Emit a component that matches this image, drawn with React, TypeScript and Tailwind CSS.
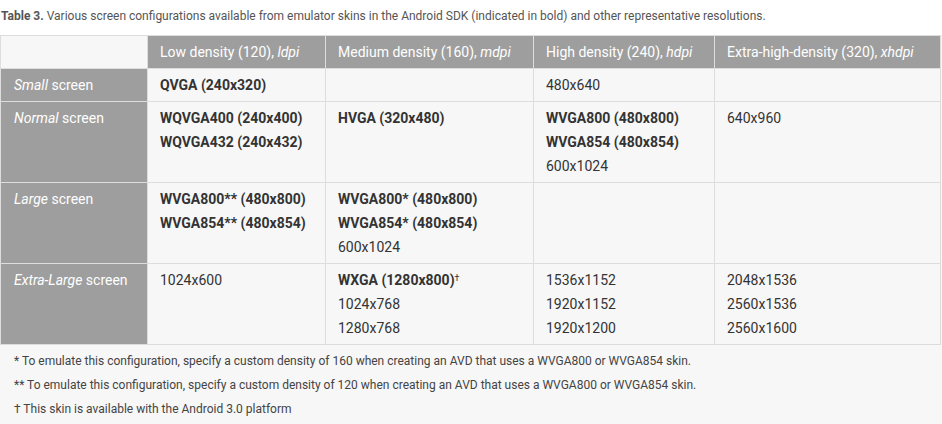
import React from 'react';

type Line = { text: string; bold?: boolean; sup?: string };

const rows: { size: string; cells: Line[][] }[] = [
  {
    size: 'Small',
    cells: [[{ text: 'QVGA (240x320)', bold: true }], [], [{ text: '480x640' }], []],
  },
  {
    size: 'Normal',
    cells: [
      [
        { text: 'WQVGA400 (240x400)', bold: true },
        { text: 'WQVGA432 (240x432)', bold: true },
      ],
      [{ text: 'HVGA (320x480)', bold: true }],
      [
        { text: 'WVGA800 (480x800)', bold: true },
        { text: 'WVGA854 (480x854)', bold: true },
        { text: '600x1024' },
      ],
      [{ text: '640x960' }],
    ],
  },
  {
    size: 'Large',
    cells: [
      [
        { text: 'WVGA800** (480x800)', bold: true },
        { text: 'WVGA854** (480x854)', bold: true },
      ],
      [
        { text: 'WVGA800* (480x800)', bold: true },
        { text: 'WVGA854* (480x854)', bold: true },
        { text: '600x1024' },
      ],
      [],
      [],
    ],
  },
  {
    size: 'Extra-Large',
    cells: [
      [{ text: '1024x600' }],
      [{ text: 'WXGA (1280x800)', bold: true, sup: '†' }, { text: '1024x768' }, { text: '1280x768' }],
      [{ text: '1536x1152' }, { text: '1920x1152' }, { text: '1920x1200' }],
      [{ text: '2048x1536' }, { text: '2560x1536' }, { text: '2560x1600' }],
    ],
  },
];

const headers: [string, string][] = [
  ['Low density (120), ', 'ldpi'],
  ['Medium density (160), ', 'mdpi'],
  ['High density (240), ', 'hdpi'],
  ['Extra-high-density (320), ', 'xhdpi'],
];

const App: React.FC = () => {
  return (
    <div className="w-[942px] h-[424px] bg-white overflow-hidden font-['Roboto',sans-serif] text-[#333]">
      <p className="h-[35px] pt-[8px] pl-[1px] text-[12px] leading-[16px] text-[#555]">
        <b className="font-bold">Table 3.</b> Various screen configurations available from emulator skins in the
        Android SDK (indicated in bold) and other representative resolutions.
      </p>

      <div className="bg-[#f7f7f7]">
        <table className="table-fixed border-collapse w-[940px] text-[14px] leading-6">
          <colgroup>
            <col className="w-[147px]" />
            <col className="w-[178px]" />
            <col className="w-[208px]" />
            <col className="w-[181px]" />
            <col className="w-[226px]" />
          </colgroup>
          <thead>
            <tr>
              <th className="border border-[#dddddd] bg-[#f7f7f7]" />
              {headers.map(([label, dpi]) => (
                <th
                  key={dpi}
                  className="border border-[#dddddd] bg-[#9e9e9e] px-3 py-1 text-left font-normal text-white"
                >
                  {label}
                  <i>{dpi}</i>
                </th>
              ))}
            </tr>
          </thead>
          <tbody>
            {rows.map((row) => (
              <tr key={row.size}>
                <td className="border border-[#dddddd] bg-[#9e9e9e] pl-[13px] pr-3 py-1 align-top text-white">
                  <i>{row.size}</i> screen
                </td>
                {row.cells.map((lines, i) => (
                  <td key={i} className="border border-[#dddddd] bg-[#f7f7f7] px-3 py-1 align-top">
                    {lines.map((l) => (
                      <div key={l.text} className={l.bold ? 'font-bold' : ''}>
                        {l.text}
                        {l.sup && <sup className="text-[9px] font-normal">{l.sup}</sup>}
                      </div>
                    ))}
                  </td>
                ))}
              </tr>
            ))}
          </tbody>
        </table>

        <div className="h-[80px] pl-[14px] pt-[4px] text-[12px] leading-6 text-[#444]">
          <p>* To emulate this configuration, specify a custom density of 160 when creating an AVD that uses a WVGA800 or WVGA854 skin.</p>
          <p>** To emulate this configuration, specify a custom density of 120 when creating an AVD that uses a WVGA800 or WVGA854 skin.</p>
          <p>† This skin is available with the Android 3.0 platform</p>
        </div>
      </div>
    </div>
  );
};

export default App;
